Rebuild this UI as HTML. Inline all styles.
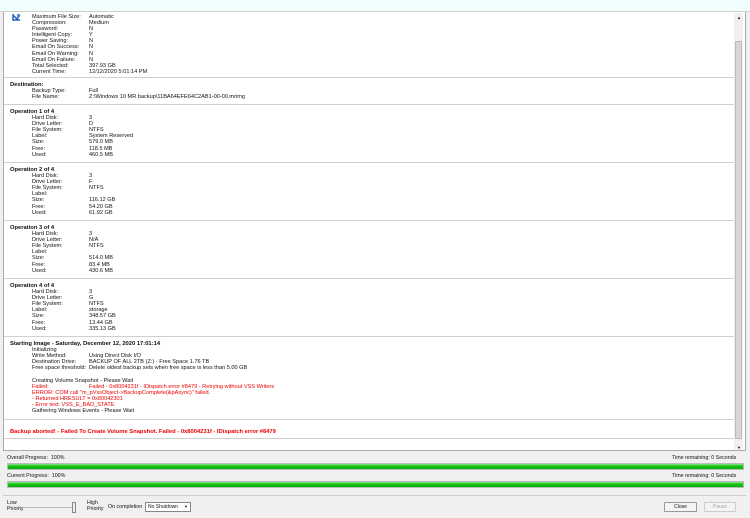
<!DOCTYPE html>
<html><head><meta charset="utf-8"><style>
*{margin:0;padding:0;box-sizing:border-box}
body{width:750px;height:518px;overflow:hidden;background:#f0f0f0;font-family:"Liberation Sans",sans-serif;font-size:5.6px;color:#111;position:relative}
.top{position:absolute;left:0;top:0;width:750px;height:12px;background:#f2fdfe;border-bottom:1px solid #c9d0d0}
.box{position:absolute;left:3px;top:12px;width:743px;height:439px;background:#fff;border:1px solid #aaa;border-top:none}
.sb{position:absolute;left:734px;top:13px;width:9px;height:437px;background:#f0f0f0}
.th{position:absolute;left:735px;top:41px;width:7px;height:398px;background:#d6d6d6;border:1px solid #bbb}
.s{position:absolute;left:0;line-height:6.1px;white-space:nowrap}
.l{position:absolute;left:32px}
.v{position:absolute;left:89px}
.r{height:6.1px;position:relative}
.h{position:absolute;left:10px;font-weight:bold;font-size:5.8px}
.sep{position:absolute;left:4px;width:730px;height:1px;background:#d0d0d0}
.red{color:#e00}
.pt{position:absolute;font-size:5.3px}
.bar{position:absolute;left:7px;width:737px;height:7px;background:linear-gradient(#8fe88f,#18c418 40%,#06b006);border:1px solid #bbb}
.bot{position:absolute;left:3px;top:495px;width:743px;height:21px;border-top:1px solid #ccc;background:#f0f0f0}
.btn{position:absolute;top:502px;height:10px;border:1px solid #999;background:#f4f4f4;font-size:5px;text-align:center;line-height:8px;border-radius:1px}
</style></head><body>
<div class="top"></div>
<div class="box"></div>
<div class="sb"></div><div class="th"></div>
<div style="position:absolute;left:737px;top:15px;font-size:4px">▲</div>
<div style="position:absolute;left:737px;top:445px;font-size:4px">▼</div>
<svg style="position:absolute;left:12px;top:13px" width="10" height="9"><path d="M1 1 L1 7 L8 7 M1 2 L5 6 L8 2" stroke="#1b5fb5" stroke-width="1.4" fill="none"/><rect x="5" y="1" width="3" height="3" fill="#5a8fd8"/></svg>

<div class="s" style="top:14px">
<div class="r"><span class="l">Maximum File Size:</span><span class="v">Automatic</span></div>
<div class="r"><span class="l">Compression:</span><span class="v">Medium</span></div>
<div class="r"><span class="l">Password:</span><span class="v">N</span></div>
<div class="r"><span class="l">Intelligent Copy:</span><span class="v">Y</span></div>
<div class="r"><span class="l">Power Saving:</span><span class="v">N</span></div>
<div class="r"><span class="l">Email On Success:</span><span class="v">N</span></div>
<div class="r"><span class="l">Email On Warning:</span><span class="v">N</span></div>
<div class="r"><span class="l">Email On Failure:</span><span class="v">N</span></div>
<div class="r"><span class="l">Total Selected:</span><span class="v">397.93 GB</span></div>
<div class="r"><span class="l">Current Time:</span><span class="v">12/12/2020 5:01:14 PM</span></div>
</div>
<div class="sep" style="top:77px"></div>
<div class="s" style="top:82px">
<div class="r"><span class="h">Destination:</span></div>
<div class="r"><span class="l">Backup Type:</span><span class="v">Full</span></div>
<div class="r"><span class="l">File Name:</span><span class="v">Z:\Windows 10 MR backup\11BA64EFE64C2AB1-00-00.mrimg</span></div>
</div>
<div class="sep" style="top:104px"></div>

<div class="s" style="top:109px">
<div class="r"><span class="h">Operation 1 of 4</span></div>
<div class="r"><span class="l">Hard Disk:</span><span class="v">3</span></div>
<div class="r"><span class="l">Drive Letter:</span><span class="v">D</span></div>
<div class="r"><span class="l">File System:</span><span class="v">NTFS</span></div>
<div class="r"><span class="l">Label:</span><span class="v">System Reserved</span></div>
<div class="r"><span class="l">Size:</span><span class="v">579.0 MB</span></div>
<div class="r"><span class="l">Free:</span><span class="v">118.5 MB</span></div>
<div class="r"><span class="l">Used:</span><span class="v">460.5 MB</span></div>
</div>
<div class="sep" style="top:162px"></div>
<div class="s" style="top:167px">
<div class="r"><span class="h">Operation 2 of 4</span></div>
<div class="r"><span class="l">Hard Disk:</span><span class="v">3</span></div>
<div class="r"><span class="l">Drive Letter:</span><span class="v">F</span></div>
<div class="r"><span class="l">File System:</span><span class="v">NTFS</span></div>
<div class="r"><span class="l">Label:</span><span class="v"></span></div>
<div class="r"><span class="l">Size:</span><span class="v">116.12 GB</span></div>
<div class="r"><span class="l">Free:</span><span class="v">54.20 GB</span></div>
<div class="r"><span class="l">Used:</span><span class="v">61.92 GB</span></div>
</div>
<div class="sep" style="top:220px"></div>
<div class="s" style="top:225px">
<div class="r"><span class="h">Operation 3 of 4</span></div>
<div class="r"><span class="l">Hard Disk:</span><span class="v">3</span></div>
<div class="r"><span class="l">Drive Letter:</span><span class="v">N/A</span></div>
<div class="r"><span class="l">File System:</span><span class="v">NTFS</span></div>
<div class="r"><span class="l">Label:</span><span class="v"></span></div>
<div class="r"><span class="l">Size:</span><span class="v">514.0 MB</span></div>
<div class="r"><span class="l">Free:</span><span class="v">83.4 MB</span></div>
<div class="r"><span class="l">Used:</span><span class="v">430.6 MB</span></div>
</div>
<div class="sep" style="top:278px"></div>
<div class="s" style="top:283px">
<div class="r"><span class="h">Operation 4 of 4</span></div>
<div class="r"><span class="l">Hard Disk:</span><span class="v">3</span></div>
<div class="r"><span class="l">Drive Letter:</span><span class="v">G</span></div>
<div class="r"><span class="l">File System:</span><span class="v">NTFS</span></div>
<div class="r"><span class="l">Label:</span><span class="v">storage</span></div>
<div class="r"><span class="l">Size:</span><span class="v">348.57 GB</span></div>
<div class="r"><span class="l">Free:</span><span class="v">13.44 GB</span></div>
<div class="r"><span class="l">Used:</span><span class="v">335.13 GB</span></div>
</div>
<div class="sep" style="top:336px"></div>
<div class="s" style="top:341px">
<div class="r"><span class="h">Starting Image - Saturday, December 12, 2020 17:01:14</span></div>
<div class="r"><span class="l">Initializing</span></div>
<div class="r"><span class="l">Write Method:</span><span class="v">Using Direct Disk I/O</span></div>
<div class="r"><span class="l">Destination Drive:</span><span class="v">BACKUP OF ALL 2TB (Z:) - Free Space 1.76 TB</span></div>
<div class="r"><span class="l">Free space threshold:</span><span class="v">Delete oldest backup sets when free space is less than 5.00 GB</span></div>
<div class="r"></div>
<div class="r"><span class="l">Creating Volume Snapshot - Please Wait</span></div>
<div class="r red"><span class="l">Failed:</span><span class="v">Failed - 0x8004231f - IDispatch error #8479 - Retrying without VSS Writers</span></div>
<div class="r red"><span class="l">ERROR: COM call "m_pVssObject-&gt;BackupComplete(&amp;pAsync)" failed.</span></div>
<div class="r red"><span class="l">- Returned HRESULT = 0x80042301</span></div>
<div class="r red"><span class="l">- Error text: VSS_E_BAD_STATE</span></div>
<div class="r"><span class="l">Gathering Windows Events - Please Wait</span></div>
</div>
<div class="sep" style="top:419px"></div>
<div class="s red" style="top:429px"><div class="r"><span class="h">Backup aborted! - Failed To Create Volume Snapshot. Failed - 0x8004231f - IDispatch error #8479</span></div></div>
<div class="sep" style="top:438px"></div>

<div class="pt" style="left:7px;top:455px">Overall Progress:&nbsp; 100%</div>
<div class="pt" style="left:672px;top:455px">Time remaining: 0 Seconds</div>
<div class="bar" style="top:463px"></div>
<div class="pt" style="left:7px;top:473px">Current Progress:&nbsp; 100%</div>
<div class="pt" style="left:672px;top:473px">Time remaining: 0 Seconds</div>
<div class="bar" style="top:481px"></div>

<div class="bot"></div>
<div class="pt" style="left:7px;top:500px;line-height:6px">Low<br>Priority</div>
<div style="position:absolute;left:22px;top:507px;width:52px;height:1px;background:#bbb"></div>
<div style="position:absolute;left:72px;top:502px;width:4px;height:11px;background:#eee;border:1px solid #888"></div>
<div class="pt" style="left:87px;top:500px;line-height:6px">High<br>Priority</div>
<div class="pt" style="left:108px;top:504px">On completion</div>
<div style="position:absolute;left:145px;top:502px;width:46px;height:10px;background:#fff;border:1px solid #888;font-size:5px;line-height:8px;padding-left:2px">No Shutdown<span style="position:absolute;right:2px;font-size:4px">▼</span></div>
<div class="btn" style="left:664px;width:33px">Close</div>
<div class="btn" style="left:704px;width:32px;color:#aaa;border-color:#ccc">Pause</div>
</body></html>
